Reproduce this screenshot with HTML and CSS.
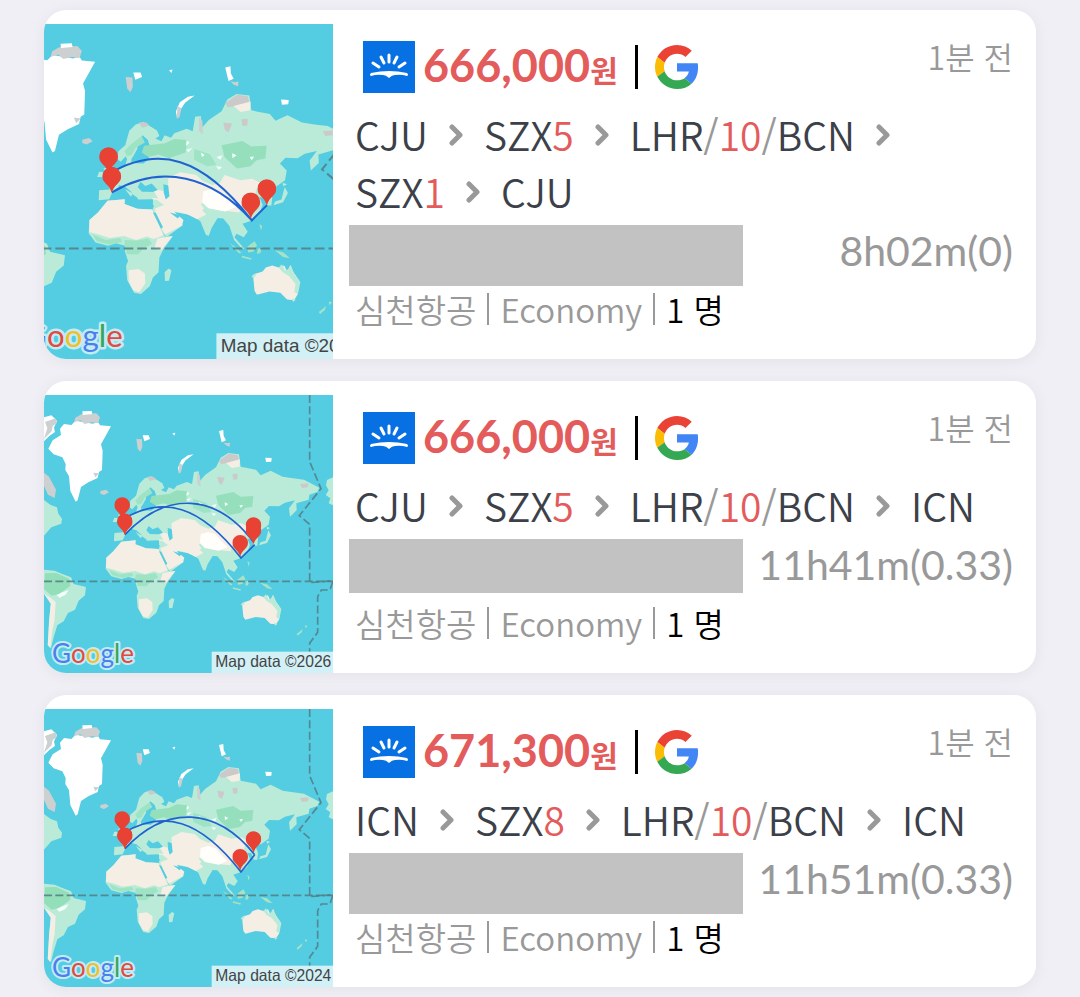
FILE: index.html
```
<!DOCTYPE html>
<html lang="ko">
<head>
	<meta charset="utf-8">
	<meta name="viewport" content="width=device-width, initial-scale=1">
	<title>항공권 목록</title>
	<link rel="stylesheet" href="styles.css">
</head>
<body>
	<!-- 공통 그림 (지도, 핀, 로고) -->
	<svg class="defs" aria-hidden="true">
		<symbol id="world" viewBox="12 45 867 834">
			<rect x="12" y="45" width="867" height="834" fill="#54cce2"/>
			<!-- 그린란드, 북극 섬 -->
			<g fill="#fff">
				<path d="M72 132 60 146 63 165 38 181 25 206 41 223 67 232 77 252 76 270 87 289 91 333 107 365 113 361 123 321 145 307 173 294 177 276 186 270 188 212 183 193 213 139 180 136 174 126 158 131 107 122 94 135Z"/>
				<path d="M12 112 34 106 51 122 42 143 45 156 28 168 12 184Z"/>
				<path d="M308 166 326 166 330 177 313 184ZM397 160 406 158 403 167ZM537 153 550 150 551 168 558 181 545 187ZM676 233 695 234 694 245 678 246ZM444 226 461 223 437 241 425 259 417 279 414 263 424 240Z"/>
			</g>
			<g fill="#ccd0d0">
				<path d="M106 113 124 103 169 100 180 112 174 130 156 127 134 132 121 121 102 127Z"/>
				<path d="M15 126 47 115 51 129 38 138 35 154 12 176 22 145ZM160 278 177 280 166 292Z"/>
				<path d="M289 177 306 178 307 201 301 215 293 206ZM550 187 560 190 570 188 569 200 558 196ZM181 333 198 329 207 337 192 345 181 341ZM12 278 27 290 48 329 44 354 24 344 12 318ZM418 249 428 255 423 277 416 281Z"/>
			</g>
			<path d="M127 94 155 93 157 102 128 105Z" fill="#fff"/>
			<!-- 유라시아 -->
			<g fill="#b9ebd8">
				<path d="M222 484 223 459 250 457 241 438 237 430 257 426 267 410 288 397 293 380 304 374 303 391 333 392 347 382 348 365 370 357 350 352 344 333 331 322 319 337 318 356 308 374 297 389 289 374 277 388 268 381 271 362 288 347 298 311 314 295 333 289 367 310 373 324 363 330 378 337 386 322 402 328 410 317 441 306 456 312 462 276 476 274 480 302 496 284 528 262 542 233 565 219 597 223 602 260 648 269 662 286 692 272 728 290 759 295 792 299 838 323 832 336 808 344 806 359 769 370 770 391 750 410 747 385 765 361 735 368 717 379 687 378 673 392 690 410 686 434 665 449 646 455 654 476 652 497 641 497 634 478 622 476 630 495 621 519 603 534 580 542 593 562 583 576 565 567 560 576 584 604 580 606 559 583 547 547 532 529 518 528 503 553 496 572 489 570 475 536 454 521 409 513 427 532 431 546 391 575 377 559 354 512 360 496 325 497 318 477 299 464 297 475 270 452 255 466 248 481Z"/>
				<path d="M233 405 250 402 257 421 233 425 241 413ZM223 413 234 414 230 426 218 426ZM680 440 691 444 681 449ZM685 451 693 466 681 489 657 496 661 487 677 482Z"/>
				<path d="M472 276 480 287 482 320 472 312Z" fill="#ccd0d0"/>
			</g>
			<path d="M335 348 387 342 410 331 443 334 438 365 397 379 371 370 346 376 329 365ZM528 347 580 336 602 350 640 348 637 380 615 384 600 399 566 405 535 376Z" fill="#95dfbd"/>
			<path d="M300 346 329 324 337 340 314 353 304 371 293 374 286 362ZM460 356 499 369 515 396 492 399 459 383Z" fill="#9fe3c5"/>
			<path d="M537 242 567 221 593 225 597 241 565 249 543 252ZM532 290 554 293 545 315 536 308ZM577 282 593 281 592 298 580 299ZM780 312 805 310 804 322 786 324ZM322 290 341 290 348 298 330 303Z" fill="#ccc9ca"/>
			<path d="M558 249 600 238 599 260 575 264ZM395 429 424 414 464 420 480 435 505 446 524 441 535 421 575 434 604 430 625 441 613 460 610 483 578 495 572 514 532 510 511 502 486 481 472 502 490 519 467 531 431 513 409 512 382 484 354 482 360 456 394 463Z" fill="#f4eee4"/>
			<path d="M394 459 419 455 429 476 448 485 470 486 484 504 469 524 433 516 405 510 368 484 391 480Z" fill="#f4eee4"/>
			<path d="M482 462 505 456 526 463 549 488 563 501 536 512 495 504 480 490Z" fill="#fffefb"/>
			<path d="M441 334 448 341 439 348ZM440 358 455 354 445 364ZM476 365 486 371 479 376ZM515 376 530 372 525 383ZM554 367 565 372 555 379ZM598 376 609 375 603 384ZM514 399 529 401 521 408Z" fill="#f3fff9"/>
			<!-- 흑해, 카스피해 -->
			<path d="M319 451 326 438 338 448 354 442 369 458 352 465 330 463ZM383 444 395 447 398 474 389 482 384 465ZM272 446 289 451 304 464 302 476 320 482 357 481 357 498 323 502 284 489 270 474Z" fill="#54cce2"/>
			<path d="M287 456 307 467 302 475ZM307 453 319 459 316 476 307 468ZM318 462 360 463 370 479 318 477Z" fill="#b9ebd8"/>
			<!-- 아프리카 -->
			<path d="M244 485 287 481 286 493 318 505 355 507 368 537 387 574 406 574 383 606 373 626 371 663 357 676 349 698 327 717 310 714 293 683 290 647 295 635 287 610 288 597 265 591 245 597 214 589 197 566 199 533 220 514Z" fill="#b9ebd8"/>
			<path d="M244 485 287 481 286 493 318 505 355 507 368 537 383 571 359 580 342 574 315 583 285 573 249 578 222 569 198 563 199 533 220 514Z" fill="#f4eee4"/>
			<path d="M368 579 406 573 377 609 361 602ZM296 658 321 655 337 666 338 691 323 713 308 708 297 686Z" fill="#f4eee4"/>
			<path d="M287 583 317 584 346 579 355 592 334 603 320 619 293 618 286 597ZM207 569 240 583 276 578 280 588 248 594 217 586Z" fill="#9fe3c5"/>
			<path d="M361 505 398 490 412 515 433 533 429 547 387 569 375 548Z" fill="#f4eee4"/>
			<path d="M357 514 364 515 382 551 377 555ZM399 514 425 521 419 529Z" fill="#54cce2"/>
			<path d="M396 654 403 658 397 684 387 685 386 663Z" fill="#b9ebd8"/>
			<!-- 남북 아메리카 -->
			<path d="M12 569 44 572 67 582 93 592 101 612 138 621 135 646 116 662 105 689 84 699 71 724 52 736 41 772 33 805 24 789 27 719 34 664 12 642Z" fill="#b9ebd8"/>
			<path d="M15 580 49 579 88 597 91 617 58 641 35 647 12 627Z" fill="#92dfba"/>
			<path d="M12 641 28 650 47 666 44 719 37 753 31 805 23 795 28 718 32 671Z" fill="#f4eee4"/>
			<path d="M12 360 32 375 51 382 55 401 66 416 64 431 34 442 12 467ZM879 292 861 300 858 316 866 331 857 345 871 355 866 370 879 376Z" fill="#b9ebd8"/>
			<path d="M50 645 68 637 86 630 76 645 58 653Z" fill="#f4fffa"/>
			<!-- 오세아니아 -->
			<path d="M606 669 630 661 638 651 654 646 670 651 684 646 691 661 699 645 707 663 722 685 717 719 708 733 691 731 674 714 647 711 616 719 610 710Z" fill="#f4eee4"/>
			<path d="M670 651 678 643 686 659 694 655 700 645 709 668 724 688 718 718 709 712 712 692 695 672 680 663ZM607 678 602 673 616 664 613 671ZM702 729 713 731 706 737Z" fill="#b9ebd8"/>
			<path d="M591 600 610 586 616 596 607 612 594 614ZM660 608 681 613 698 628 681 625ZM548 590 562 600 578 615 571 616ZM579 622 603 628 601 632 578 626ZM618 605 629 600 624 616 616 617ZM622 543 629 548 626 560ZM795 736 803 738 796 745ZM770 762 788 747 785 757 773 767Z" fill="#a5e3c6"/>
			<!-- 적도, 날짜변경선 -->
			<g fill="none" stroke="#527d84" stroke-opacity=".85" stroke-width="5" stroke-dasharray="24 10">
				<path d="M12 604H879"/>
				<path d="M809 45V245L843 326 778 407 809 433V608L879 602 870 630 844 630 833 650V757L809 790V879"/>
			</g>
		</symbol>
		<symbol id="pin" viewBox="0 0 48 66">
			<path d="M24 0A24 24 0 0 0 0 24C0 42 18 45 23 64Q24 67 25 64C30 45 48 42 48 24A24 24 0 0 0 24 0Z" fill="#e84234"/>
		</symbol>
		<symbol id="sunrise" viewBox="0 0 52 52">
			<rect width="52" height="52" fill="#0770e3"/>
			<path d="M26 14V21M18 16 21 22M34 16 31 22M10 22 16 26M42 22 36 26" fill="none" stroke="#fff" stroke-width="3" stroke-linecap="round"/>
			<path d="M8 32Q26 28 44 32Q46 34 44 35Q38 33 32 34Q29 34 26 37Q23 34 20 34Q14 33 8 35Q6 34 8 32Z" fill="#fff"/>
		</symbol>
		<symbol id="google" viewBox="0 0 48 48">
			<path fill="#ea4335" d="M24 9.5c3.54 0 6.71 1.22 9.21 3.6l6.85-6.85C35.9 2.38 30.47 0 24 0 14.62 0 6.51 5.38 2.56 13.22l7.98 6.19C12.43 13.72 17.74 9.5 24 9.5z"/>
			<path fill="#4285f4" d="M46.98 24.55c0-1.57-.15-3.09-.38-4.55H24v9.02h12.94c-.58 2.96-2.26 5.48-4.78 7.18l7.73 6c4.51-4.18 7.09-10.36 7.09-17.65z"/>
			<path fill="#fbbc05" d="M10.53 28.59c-.48-1.45-.76-2.99-.76-4.59s.27-3.14.76-4.59l-7.98-6.19C.92 16.46 0 20.12 0 24c0 3.88.92 7.54 2.56 10.78l7.97-6.19z"/>
			<path fill="#34a853" d="M24 48c6.48 0 11.93-2.13 15.89-5.81l-7.73-6c-2.15 1.45-4.92 2.3-8.16 2.3-6.26 0-11.57-4.22-13.47-9.91l-7.98 6.19C6.51 42.62 14.62 48 24 48z"/>
		</symbol>
		<symbol id="chevron" viewBox="0 0 16 22">
			<path d="M4 3 12 11 4 19" fill="none" stroke="#999" stroke-width="5" stroke-linecap="round" stroke-linejoin="round"/>
		</symbol>
	</svg>

	<main class="list">
		<article class="card">
			<svg class="map" viewBox="12 45 867 834" preserveAspectRatio="xMidYMid slice">
				<use href="#world" x="12" y="45" width="867" height="834"/>
				<path class="path" d="M246 419C370 345 480 375 603 534M255 464C380 390 505 425 603 534L641 496"/>
				<use href="#pin" x="223" y="351" width="47" height="66"/>
				<use href="#pin" x="231" y="400" width="47" height="66"/>
				<use href="#pin" x="577" y="464" width="47" height="66"/>
				<use href="#pin" x="617" y="431" width="47" height="66"/>
				<text class="map-logo" x="36" y="850"><tspan class="g-blue">G</tspan><tspan class="g-red">o</tspan><tspan class="g-yellow">o</tspan><tspan class="g-blue">g</tspan><tspan class="g-green">l</tspan><tspan class="g-red">e</tspan></text>
				<rect class="map-strip" x="515" y="815" width="364" height="64"/>
				<text class="map-data" x="526" y="862">Map data ©2026</text>
			</svg>
			<div class="info">
				<div class="head">
					<svg class="seller"><use href="#sunrise"/></svg>
					<strong class="price">666,000<span class="won">원</span></strong>
					<span class="bar"></span>
					<svg class="google"><use href="#google"/></svg>
					<time class="ago">1분 전</time>
				</div>
				<div class="route">
					<span class="hop">CJU<svg class="chevron"><use href="#chevron"/></svg></span>
					<span class="hop">SZX<b>5</b><svg class="chevron"><use href="#chevron"/></svg></span>
					<span class="hop">LHR<i>/</i><b>10</b><i>/</i>BCN<svg class="chevron"><use href="#chevron"/></svg></span>
					<span class="hop">SZX<b>1</b><svg class="chevron"><use href="#chevron"/></svg></span>
					<span class="hop">CJU</span>
				</div>
				<div class="leg">
					<div class="blank"></div>
					<span class="duration">8h02m(0)</span>
				</div>
				<div class="foot"><span>심천항공</span><span>Economy</span><span class="people">1 명</span></div>
			</div>
		</article>

		<article class="card">
			<svg class="map" viewBox="12 45 867 834" preserveAspectRatio="xMidYMid slice">
				<use href="#world" x="12" y="45" width="867" height="834"/>
				<path class="path" d="M246 419C370 345 480 375 603 534L644 494M255 464C380 330 530 340 641 487"/>
				<use href="#pin" x="223" y="351" width="47" height="66"/>
				<use href="#pin" x="231" y="400" width="47" height="66"/>
				<use href="#pin" x="577" y="464" width="47" height="66"/>
				<use href="#pin" x="617" y="411" width="47" height="66"/>
				<use href="#pin" x="617" y="427" width="47" height="66"/>
				<text class="map-logo" x="36" y="850"><tspan class="g-blue">G</tspan><tspan class="g-red">o</tspan><tspan class="g-yellow">o</tspan><tspan class="g-blue">g</tspan><tspan class="g-green">l</tspan><tspan class="g-red">e</tspan></text>
				<rect class="map-strip" x="515" y="815" width="364" height="64"/>
				<text class="map-data" x="526" y="862">Map data ©2026</text>
			</svg>
			<div class="info">
				<div class="head">
					<svg class="seller"><use href="#sunrise"/></svg>
					<strong class="price">666,000<span class="won">원</span></strong>
					<span class="bar"></span>
					<svg class="google"><use href="#google"/></svg>
					<time class="ago">1분 전</time>
				</div>
				<div class="route">
					<span class="hop">CJU<svg class="chevron"><use href="#chevron"/></svg></span>
					<span class="hop">SZX<b>5</b><svg class="chevron"><use href="#chevron"/></svg></span>
					<span class="hop">LHR<i>/</i><b>10</b><i>/</i>BCN<svg class="chevron"><use href="#chevron"/></svg></span>
					<span class="hop">ICN</span>
				</div>
				<div class="leg">
					<div class="blank blank-short"></div>
					<span class="duration">11h41m(0.33)</span>
				</div>
				<div class="foot"><span>심천항공</span><span>Economy</span><span class="people">1 명</span></div>
			</div>
		</article>

		<article class="card">
			<svg class="map" viewBox="12 45 867 834" preserveAspectRatio="xMidYMid slice">
				<use href="#world" x="12" y="45" width="867" height="834"/>
				<path class="path" d="M246 419C370 345 480 375 603 534L644 482M255 464C380 330 530 340 644 482"/>
				<use href="#pin" x="223" y="351" width="47" height="66"/>
				<use href="#pin" x="231" y="400" width="47" height="66"/>
				<use href="#pin" x="577" y="464" width="47" height="66"/>
				<use href="#pin" x="617" y="411" width="47" height="66"/>
				<text class="map-logo" x="36" y="850"><tspan class="g-blue">G</tspan><tspan class="g-red">o</tspan><tspan class="g-yellow">o</tspan><tspan class="g-blue">g</tspan><tspan class="g-green">l</tspan><tspan class="g-red">e</tspan></text>
				<rect class="map-strip" x="515" y="815" width="364" height="64"/>
				<text class="map-data" x="526" y="862">Map data ©2024</text>
			</svg>
			<div class="info">
				<div class="head">
					<svg class="seller"><use href="#sunrise"/></svg>
					<strong class="price">671,300<span class="won">원</span></strong>
					<span class="bar"></span>
					<svg class="google"><use href="#google"/></svg>
					<time class="ago">1분 전</time>
				</div>
				<div class="route">
					<span class="hop">ICN<svg class="chevron"><use href="#chevron"/></svg></span>
					<span class="hop">SZX<b>8</b><svg class="chevron"><use href="#chevron"/></svg></span>
					<span class="hop">LHR<i>/</i><b>10</b><i>/</i>BCN<svg class="chevron"><use href="#chevron"/></svg></span>
					<span class="hop">ICN</span>
				</div>
				<div class="leg">
					<div class="blank"></div>
					<span class="duration">11h51m(0.33)</span>
				</div>
				<div class="foot"><span>심천항공</span><span>Economy</span><span class="people">1 명</span></div>
			</div>
		</article>
	</main>
</body>
</html>
```
FILE: styles.css
```
* {
	box-sizing: border-box;
}

body {
	margin: 0;
	background-color: #f0eff5;
	font-family: "Noto Sans CJK KR", sans-serif;
	font-weight: 350;
	color: #999;
}

.defs {
	position: absolute;
	width: 0;
	height: 0;
}

.list {
	display: flex;
	flex-direction: column;
	gap: 22px;
	padding: 10px 44px;
}

.card {
	display: flex;
	overflow: hidden;
	background-color: #fff;
	border-radius: 22px;
	box-shadow: 0 2px 16px #0000000f;
}

/* 지도 */
.map {
	flex: none;
	width: 289px;
	height: auto;
	margin-top: 14px;
	min-height: 0;
	contain: size;
}

.path {
	fill: none;
	stroke: #1f62d0;
	stroke-width: 5;
}

.map-logo {
	font-family: "Lato", sans-serif;
	font-size: 78px;
	font-weight: 400;
	stroke: #c3ebf4;
	stroke-width: 12;
	stroke-linejoin: round;
	paint-order: stroke;
}

.g-blue {fill: #4a80ee;}
.g-red {fill: #e4493d;}
.g-yellow {fill: #f2bf2c;}
.g-green {fill: #36a557;}

.map-strip {
	fill: #d2f1f7;
}

.map-data {
	font-family: "Liberation Sans", sans-serif;
	font-size: 47px;
	font-weight: 400;
	fill: #444;
}

/* 오른쪽 내용 */
.info {
	flex: 1;
	min-width: 0;
	padding: 31px 23px 18px 16px;
}

.head {
	display: flex;
	align-items: center;
	height: 52px;
	margin-bottom: 13px;
	padding-left: 14px;
}

.seller {
	width: 52px;
	height: 52px;
	margin-right: 8px;
}

.price {
	font-family: "Lato", "Noto Sans CJK KR", sans-serif;
	font-size: 45px;
	line-height: 52px;
	font-weight: 700;
	color: #e35b5b;
}

.won {
	font-size: 30px;
}

.bar {
	width: 3px;
	height: 44px;
	margin: 0 17px;
	background-color: #000;
}

.google {
	width: 44px;
	height: 44px;
}

.ago {
	margin-left: auto;
	font-size: 32px;
	line-height: 30px;
	align-self: flex-start;
}

.route {
	display: flex;
	flex-wrap: wrap;
	margin-bottom: 2px;
	padding-left: 6px;
	font-size: 39px;
	line-height: 57px;
	color: #3c4149;
}

.hop {
	display: flex;
	align-items: center;
}

.route b {
	font-weight: 350;
	color: #e35b5b;
}

.route i {
	font-style: normal;
	font-weight: 400;
	color: #999;
}

.chevron {
	width: 16px;
	height: 22px;
	margin: 0 20px;
}

.leg {
	display: flex;
	justify-content: space-between;
	align-items: flex-start;
	height: 59px;
}

.blank {
	width: 394px;
	height: 61px;
	margin-top: 3px;
	background-color: #c2c2c2;
}

.blank-short {
	height: 54px;
}

.duration {
	font-family: "Lato", sans-serif;
	font-size: 41px;
	line-height: 58px;
	font-weight: 400;
}

.foot {
	display: flex;
	align-items: center;
	height: 60px;
	padding: 0 0 4px 6px;
	font-size: 33px;
}

.foot span + span {
	margin-left: 11px;
	padding-left: 11px;
	border-left: 2px solid #999;
	line-height: 32px;
}

.foot .people {
	color: #000;
}
```
